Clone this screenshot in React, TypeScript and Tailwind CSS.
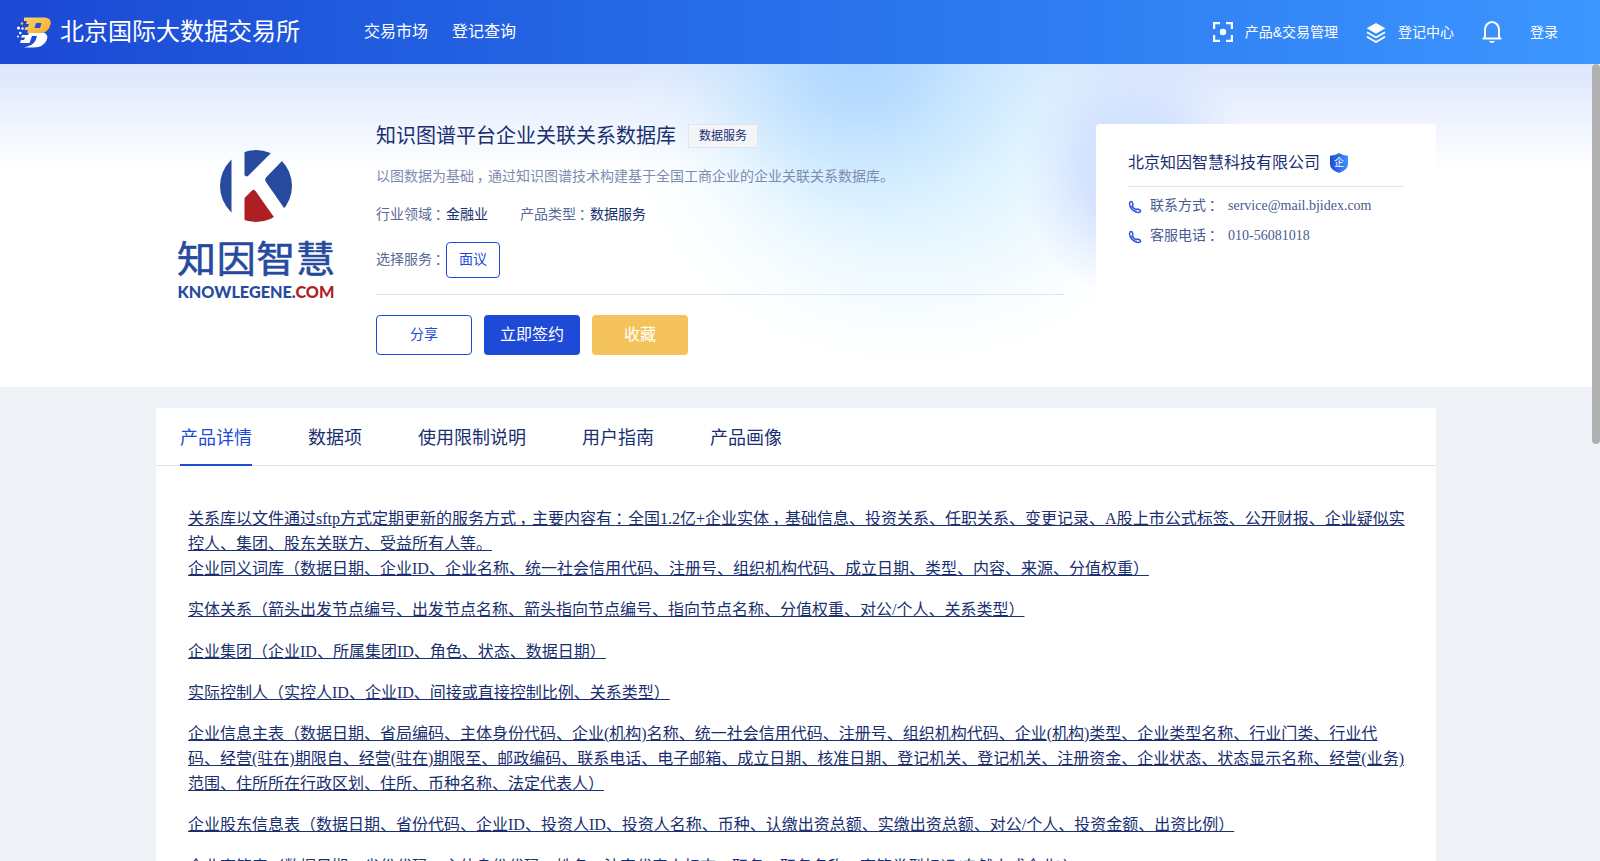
import { Fragment, useState } from 'react'
import type { ReactNode } from 'react'

const tabs = ['产品详情', '数据项', '使用限制说明', '用户指南', '产品画像']

const paragraphs = [
  [
    '关系库以文件通过sftp方式定期更新的服务方式，主要内容有：全国1.2亿+企业实体，基础信息、投资关系、任职关系、变更记录、A股上市公式标签、公开财报、企业疑似实控人、集团、股东关联方、受益所有人等。',
    '企业同义词库（数据日期、企业ID、企业名称、统一社会信用代码、注册号、组织机构代码、成立日期、类型、内容、来源、分值权重）',
  ],
  ['实体关系（箭头出发节点编号、出发节点名称、箭头指向节点编号、指向节点名称、分值权重、对公/个人、关系类型）'],
  ['企业集团（企业ID、所属集团ID、角色、状态、数据日期）'],
  ['实际控制人（实控人ID、企业ID、间接或直接控制比例、关系类型）'],
  [
    '企业信息主表（数据日期、省局编码、主体身份代码、企业(机构)名称、统一社会信用代码、注册号、组织机构代码、企业(机构)类型、企业类型名称、行业门类、行业代码、经营(驻在)期限自、经营(驻在)期限至、邮政编码、联系电话、电子邮箱、成立日期、核准日期、登记机关、登记机关、注册资金、企业状态、状态显示名称、经营(业务)范围、住所所在行政区划、住所、币种名称、法定代表人）',
  ],
  ['企业股东信息表（数据日期、省份代码、企业ID、投资人ID、投资人名称、币种、认缴出资总额、实缴出资总额、对公/个人、投资金额、出资比例）'],
  ['企业高管表（数据日期、省份代码、主体身份代码、姓名、法定代表人标志、职务、职务名称、高管类型标识(自然人或企业)）'],
]

// half-width punctuation plus tracking puts commas and colons near the middle of their box
function Han({ text }: { text: string }) {
  return (
    <>
      {text.split(/(.[，：])/).map((part, i) =>
        i % 2 ? (
          <Fragment key={i}>
            <span className="tracking-[0.2em]">{part[0]}</span>
            <span className="tracking-[0.3em] [font-feature-settings:'halt']">{part[1]}</span>
          </Fragment>
        ) : (
          <Fragment key={i}>{part}</Fragment>
        ),
      )}
    </>
  )
}

function BrandLogo() {
  return (
    <svg width="36" height="32" viewBox="0 0 36 32" className="shrink-0">
      <defs>
        <linearGradient id="brand" x1="0" y1="0" x2="1" y2="1">
          <stop offset="0" stopColor="#fbd56b" />
          <stop offset="1" stopColor="#f2ab2c" />
        </linearGradient>
      </defs>
      <path
        d="M8 1.5H29Q36 2.5 34.5 8.5Q32.5 16.5 25 17H11L12 14H8.500L9.500 11H12L13 8H10L11 5H8Z"
        fill="url(#brand)"
      />
      <path
        d="M28 16.500Q33 19 30.500 24.500Q27.500 31 18 31.500H8Q17 29.500 19.500 24.500L21 20H16L13.500 27H4L5 24H8L9 21.500H5L6 19H12L13 17H25Z"
        fill="#fff"
      />
      <path d="M20 7h5.500L24 12h-5.500z" fill="#2350d8" />
      <circle cx="2.500" cy="12" r="1.600" fill="#fff" />
      <circle cx="4.300" cy="17" r="1.300" fill="#fff" />
      <circle cx="2" cy="20.500" r="1" fill="#fff" />
      <circle cx="6" cy="7.500" r="1.200" fill="#f7c04a" />
      <circle cx="6.500" cy="12.500" r="1.200" fill="#fff" />
    </svg>
  )
}

function ScanIcon() {
  return (
    <svg width="20" height="20" viewBox="0 0 20 20" fill="none" stroke="#fff" strokeWidth="2.200">
      <path d="M1.100 7V1.100H7M13 1.100h5.900V7M18.900 13v5.900H13M7 18.900H1.100V13" />
      <circle cx="10" cy="10" r="3.200" fill="#fff" stroke="none" />
    </svg>
  )
}

function LayersIcon() {
  return (
    <svg width="20" height="20" viewBox="0 0 20 20" fill="none" className="translate-y-px">
      <path d="M10 0l9.300 5.300L10 10.800.700 5.300z" fill="#fff" />
      <path d="M1 9.300l9 5.200 9-5.200M1 13.800l9 5.200 9-5.200" stroke="#fff" strokeWidth="1.900" />
    </svg>
  )
}

function BellIcon() {
  return (
    <svg width="20" height="22" viewBox="0 0 20 22" fill="none">
      <path d="M3 17.500V8.500a7 7.500 0 0 1 14 0v9M.500 17.500h19" stroke="#fff" strokeWidth="2" />
      <path d="M7 20h6q-1 2-3 2t-3-2z" fill="#fff" />
    </svg>
  )
}

function PhoneIcon() {
  return (
    <svg width="14" height="14" viewBox="0 0 14 14" fill="none" stroke="#2b55d9" strokeWidth="1.500" className="mt-[2px] mr-2 shrink-0">
      <path
        d="M2 2Q3 1.200 4 1.800L5 4.200Q5 5.200 4 6Q5.500 8.500 8.300 9.800Q9.200 8.800 10.200 9.200L12.300 10.200Q13 11 12 12.200Q10.500 13 7.500 11.800Q3.500 10 2 6Q1 3.200 2 2Z"
        strokeLinejoin="round"
      />
    </svg>
  )
}

function ShieldIcon() {
  return (
    <svg width="18" height="20" viewBox="0 0 18 20" className="ml-[10px]">
      <defs>
        <linearGradient id="shield">
          <stop offset="0" stopColor="#1d4ad6" />
          <stop offset="1" stopColor="#3d95ff" />
        </linearGradient>
      </defs>
      <path d="M9 0Q13 2.700 18 2.700V11Q18 17 9 20Q0 17 0 11V2.700Q5 2.700 9 0Z" fill="url(#shield)" />
      <text x="9" y="13.300" fontSize="10" fill="#fff" textAnchor="middle" className="font-['Noto_Sans_CJK_SC',sans-serif]">
        企
      </text>
    </svg>
  )
}

function CompanyLogo() {
  return (
    <svg width="160" height="154" viewBox="176 148 160 154" className="mt-6 ml-5 shrink-0">
      <defs>
        <clipPath id="disc">
          <circle cx="256" cy="186" r="36" />
        </clipPath>
      </defs>
      <g clipPath="url(#disc)" fill="#264a9e">
        <path d="M218 148h13.500v76H218z" />
        <path d="M244.500 148H276L248.500 175.500Q246 177.500 244.500 175z" />
        <path d="M282 161L266 177.500Q264.500 179.500 266 182L284 208L300 200V150z" />
        <path d="M244.500 198L252 190.500Q254 189 255.500 191L276 220L256 224H244.500z" fill="#ae1f24" />
      </g>
      <g transform="translate(0 272.500) scale(1 0.950)">
        <text
          x="177"
          y="0"
          fontSize="39"
          textLength="158"
          fill="#264a9e"
          stroke="#264a9e"
          strokeWidth="0.600"
          className="font-['Noto_Sans_CJK_SC',sans-serif]"
        >
          知因智慧
        </text>
      </g>
      <text
        x="177.500"
        y="297.500"
        fontSize="17"
        textLength="157"
        lengthAdjust="spacingAndGlyphs"
        fill="#264a9e"
        className="font-['Lato',sans-serif] font-black"
      >
        KNOWLEGENE.<tspan fill="#ae1f24">COM</tspan>
      </text>
    </svg>
  )
}

function Header() {
  return (
    <header className="flex h-16 shrink-0 items-center bg-linear-to-r from-[#1c48d4] to-[#3d96ff] pl-4 font-['Liberation_Sans','Noto_Sans_CJK_SC',sans-serif] text-white">
      <BrandLogo />
      <span className="ml-2 text-2xl">北京国际大数据交易所</span>
      <nav className="ml-16 flex gap-6 text-base">
        <a>交易市场</a>
        <a>登记查询</a>
      </nav>
      <div className="ml-auto flex items-center pr-[42px] text-sm">
        <ScanIcon />
        <span className="ml-3">产品&交易管理</span>
        <span className="ml-7">
          <LayersIcon />
        </span>
        <span className="ml-3">登记中心</span>
        <span className="mr-7 ml-7">
          <BellIcon />
        </span>
        <span>登录</span>
      </div>
    </header>
  )
}

function Contact({ label, children }: { label: string; children: ReactNode }) {
  return (
    <div className="flex h-[30px] items-center text-sm text-[#495b91]">
      <PhoneIcon />
      <span className="w-[78px]">
        <Han text={label} />
      </span>
      <span>{children}</span>
    </div>
  )
}

function Hero() {
  return (
    <section className="relative h-[323px] shrink-0 overflow-hidden bg-white">
      <div className="absolute inset-x-0 top-0 h-[108px] bg-linear-to-b from-[#dbe6fd] to-white" />
      <div className="absolute -top-[190px] left-[620px] h-[500px] w-[580px] bg-[radial-gradient(closest-side,#d4f0ffd9,#d4f0ffb3_35%,#d8f2ff59_65%,#dcf4ff1a_85%,#dcf4ff00)]" />
      <div className="absolute -top-[210px] left-[650px] h-[400px] w-[420px] bg-[radial-gradient(closest-side,#b0d7ff,#b0d7ffcc_25%,#b4daff59_58%,#b8ddff14_82%,#b8ddff00)]" />
      <div className="absolute -top-[20px] left-[1020px] h-[255px] w-[230px] bg-[radial-gradient(closest-side,#cfdfff,#cfdfffd9_45%,#cfdfff59_75%,#cfdfff00)]" />
      <div className="relative mx-auto flex w-[1280px] pt-[60px]">
        <CompanyLogo />
        <div className="ml-10 w-[688px] text-sm text-[#5a6a99]">
          <div className="flex h-[23px] items-center">
            <h1 className="text-xl text-[#1a2f6f]">知识图谱平台企业关联关系数据库</h1>
            <span className="ml-3 flex h-6 items-center border border-[#e3e5ea] bg-[#f4f5f9] px-[10px] text-xs text-[#1a2f6f]">数据服务</span>
          </div>
          <p className="mt-[19px] leading-[22px] text-[#7e8bb0]">
            <Han text="以图数据为基础，通过知识图谱技术构建基于全国工商企业的企业关联关系数据库。" />
          </p>
          <div className="mt-4 flex gap-8 leading-[22px]">
            <span>
              <Han text="行业领域：" />
              <span className="text-[#1a2f6f]">金融业</span>
            </span>
            <span>
              <Han text="产品类型：" />
              <span className="text-[#1a2f6f]">数据服务</span>
            </span>
          </div>
          <div className="mt-4 flex items-center">
            <span className="w-[70px]">
              <Han text="选择服务：" />
            </span>
            <button className="h-9 w-[54px] rounded border border-[#1d4ad6] text-[#1d4ad6]">面议</button>
          </div>
          <div className="mt-4 flex gap-3 border-t border-[#e1e4ea] pt-5 text-base text-white">
            <button className="h-10 w-24 rounded border border-[#1d4ad6] bg-white text-sm text-[#1d4ad6]">分享</button>
            <button className="h-10 w-24 rounded bg-[#1d4ad6]">立即签约</button>
            <button className="h-10 w-24 rounded bg-[#f4c35b]">收藏</button>
          </div>
        </div>
        <aside className="ml-8 h-[230px] w-[340px] rounded bg-white px-8 pt-4">
          <div className="mb-1 flex h-[47px] items-center border-b border-[#e1e4ea] text-base text-[#1a2f6f]">
            北京知因智慧科技有限公司
            <ShieldIcon />
          </div>
          <Contact label="联系方式：">service@mail.bjidex.com</Contact>
          <Contact label="客服电话：">010-56081018</Contact>
        </aside>
      </div>
    </section>
  )
}

export default function App() {
  const [active, setActive] = useState(0)

  return (
    <div className="flex h-[861px] flex-col overflow-hidden bg-[#eff3f8] font-['Liberation_Serif','Noto_Sans_CJK_SC',serif] text-[#1a2f6f]">
      <Header />
      <div className="relative min-h-0 flex-1 overflow-hidden pr-2">
        <Hero />
        <main className="mx-auto mt-[21px] w-[1280px] bg-white">
          <div className="flex h-[58px] gap-14 border-b border-[#e1e4ea] px-6 text-lg">
            {tabs.map((tab, i) => (
              <button
                key={tab}
                onClick={() => setActive(i)}
                className={
                  i === active ? 'h-[58px] border-b-2 border-[#1d4ad6] pt-[3px] text-[#1d4ad6]' : 'h-[58px] border-b-2 border-transparent pt-[3px]'
                }
              >
                {tab}
              </button>
            ))}
          </div>
          <div className="flex flex-col gap-4 pt-10 pr-7 pl-8 leading-[25.150px] underline">
            {paragraphs.map((lines, i) => (
              <div key={i}>
                {lines.map((line) => (
                  <p key={line}>
                    <Han text={line} />
                  </p>
                ))}
              </div>
            ))}
          </div>
        </main>
        <div className="absolute top-0 right-0 h-[380px] w-2 rounded bg-[#b0b0b0]" />
      </div>
    </div>
  )
}
